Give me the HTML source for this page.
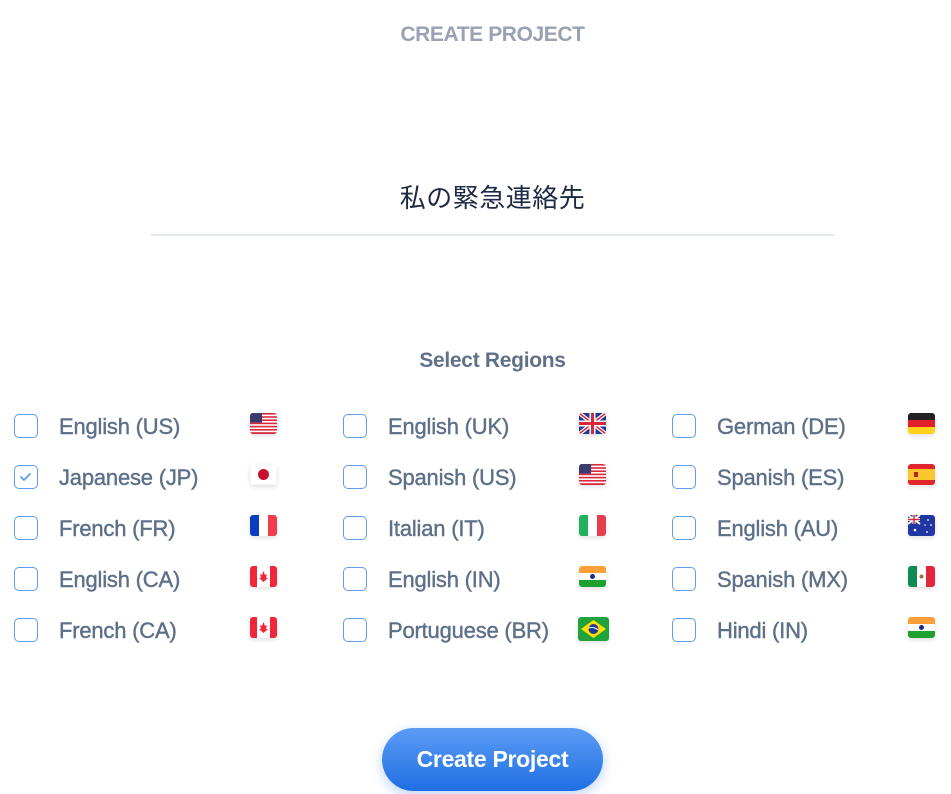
<!DOCTYPE html>
<html><head><meta charset="utf-8"><style>
*{margin:0;padding:0;box-sizing:border-box}
body{width:951px;height:794px;background:#fff;position:relative;overflow:hidden;font-family:"Liberation Sans","Noto Sans CJK JP",sans-serif}
.t{position:absolute;white-space:nowrap}
.title{left:0;width:985px;text-align:center;top:23px;font-size:21px;font-weight:bold;color:#99a1b3;letter-spacing:-0.4px}
.jp{left:0;width:985px;text-align:center;top:178px;font-size:26px;color:#1e2a44;letter-spacing:0.5px}
.line{position:absolute;left:151px;top:234px;width:683px;height:2px;background:#e3e8ec}
.sel{left:0;width:985px;text-align:center;top:349px;font-size:21px;font-weight:bold;color:#5f7088;letter-spacing:-0.3px}
.cb{position:absolute;width:24px;height:24px;border:1.5px solid #5c9cf2;border-radius:5px;background:#fff}
.lab{position:absolute;font-size:22px;color:#5d7088;white-space:nowrap;line-height:24px;-webkit-text-stroke:0.4px #5d7088;letter-spacing:-0.2px}
.fl{position:absolute;width:27px;height:21px;border-radius:3px;overflow:hidden;box-shadow:0 2px 5px rgba(0,0,0,.12)}
.fl svg{display:block;width:100%;height:100%}
.btn{position:absolute;left:382px;top:728px;width:221px;height:63px;border-radius:32px;background:linear-gradient(#5b9cf4,#1f6fe3);color:#fff;font-weight:bold;font-size:23px;text-align:center;line-height:62px;box-shadow:0 4px 12px rgba(40,110,230,.3);letter-spacing:-0.3px}
</style></head><body>
<svg width="0" height="0" style="position:absolute">
<defs>
<symbol id="us" viewBox="0 0 27 21"><rect width="27" height="21" fill="#fff"/><g fill="#d8283c"><rect y="0" width="27" height="1.6"/><rect y="3.2" width="27" height="1.6"/><rect y="6.4" width="27" height="1.6"/><rect y="9.6" width="27" height="1.6"/><rect y="12.8" width="27" height="1.6"/><rect y="16" width="27" height="1.6"/><rect y="19.2" width="27" height="1.8"/></g><rect width="12" height="9.6" fill="#3c3b6e"/></symbol>
<symbol id="uk" viewBox="0 0 27 21"><rect width="27" height="21" fill="#1f3a93"/><path d="M0 0L27 21M27 0L0 21" stroke="#fff" stroke-width="4"/><path d="M0 0L27 21M27 0L0 21" stroke="#d8283c" stroke-width="1.5"/><path d="M13.5 0V21M0 10.5H27" stroke="#fff" stroke-width="6"/><path d="M13.5 0V21M0 10.5H27" stroke="#d8283c" stroke-width="3"/></symbol>
<symbol id="de" viewBox="0 0 27 21"><rect width="27" height="7" fill="#222"/><rect y="7" width="27" height="7" fill="#e3202a"/><rect y="14" width="27" height="7" fill="#ffd11a"/></symbol>
<symbol id="jp" viewBox="0 0 27 21"><rect width="27" height="21" fill="#fff" stroke="#eee"/><circle cx="13.5" cy="10.5" r="5.5" fill="#c8102e"/></symbol>
<symbol id="es" viewBox="0 0 27 21"><rect width="27" height="21" fill="#e0252c"/><rect y="5" width="27" height="11" fill="#fcc72c"/><rect x="6" y="8" width="4" height="5" fill="#b5261e"/></symbol>
<symbol id="fr" viewBox="0 0 27 21"><rect width="9" height="21" fill="#0a3dbf"/><rect x="9" width="9" height="21" fill="#fff"/><rect x="18" width="9" height="21" fill="#f23d4f"/></symbol>
<symbol id="it" viewBox="0 0 27 21"><rect width="9" height="21" fill="#1eb35b"/><rect x="9" width="9" height="21" fill="#fff"/><rect x="18" width="9" height="21" fill="#e63d4f"/></symbol>
<symbol id="au" viewBox="0 0 27 21"><rect width="27" height="21" fill="#1f36a3"/><path d="M0 0L12 9M12 0L0 9" stroke="#fff" stroke-width="2"/><path d="M6 0V9M0 4.5H12" stroke="#fff" stroke-width="3"/><path d="M6 0V9M0 4.5H12" stroke="#d8283c" stroke-width="1.5"/><g fill="#fff"><circle cx="7" cy="15" r="1.3"/><circle cx="20" cy="5" r="0.9"/><circle cx="23" cy="10" r="0.9"/><circle cx="19" cy="17" r="0.9"/><circle cx="17" cy="10" r="0.8"/></g></symbol>
<symbol id="in" viewBox="0 0 27 21"><rect width="27" height="7" fill="#ff9f3a"/><rect y="7" width="27" height="7" fill="#fff"/><rect y="14" width="27" height="7" fill="#1fa12f"/><circle cx="13.5" cy="10.5" r="2.5" fill="#1f2a8c"/></symbol>
<symbol id="ca" viewBox="0 0 27 21"><rect width="27" height="21" fill="#fff"/><rect width="7" height="21" fill="#f2263a"/><rect x="20" width="7" height="21" fill="#f2263a"/><path d="M13.5 5L15 9L17 8L16 12L18 12L13.5 16L9 12L11 12L10 8L12 9Z" fill="#f2263a"/></symbol>
<symbol id="mx" viewBox="0 0 27 21"><rect width="9" height="21" fill="#0f8a52"/><rect x="9" width="9" height="21" fill="#fff"/><rect x="18" width="9" height="21" fill="#e3263c"/><circle cx="13.5" cy="10.5" r="2" fill="#a07040"/></symbol>
<symbol id="br" viewBox="0 0 31 24"><rect width="31" height="24" fill="#1fa33a"/><path d="M15.5 3L28 12L15.5 21L3 12Z" fill="#fedf00"/><circle cx="15.5" cy="12" r="5" fill="#1f3a93"/><path d="M10.5 11Q15.5 9.5 20.5 13" stroke="#fff" stroke-width="1" fill="none"/></symbol>
</defs></svg>

<div class="t title">CREATE PROJECT</div>
<div class="t jp">私の緊急連絡先</div>
<div class="line"></div>
<div class="t sel">Select Regions</div>

<div class="cb" style="left:14px;top:414px"></div><div class="lab" style="left:59px;top:415px">English (US)</div><div class="fl" style="left:250px;top:413px"><svg><use href="#us"/></svg></div>
<div class="cb" style="left:14px;top:465px"><svg width="21" height="21" viewBox="0 0 21 21"><path d="M6 11L9 14L15 8" stroke="#5c9cf2" stroke-width="1.8" fill="none" stroke-linecap="round" stroke-linejoin="round"/></svg></div><div class="lab" style="left:59px;top:466px">Japanese (JP)</div><div class="fl" style="left:250px;top:464px"><svg><use href="#jp"/></svg></div>
<div class="cb" style="left:14px;top:516px"></div><div class="lab" style="left:59px;top:517px">French (FR)</div><div class="fl" style="left:250px;top:515px"><svg><use href="#fr"/></svg></div>
<div class="cb" style="left:14px;top:567px"></div><div class="lab" style="left:59px;top:568px">English (CA)</div><div class="fl" style="left:250px;top:566px"><svg><use href="#ca"/></svg></div>
<div class="cb" style="left:14px;top:618px"></div><div class="lab" style="left:59px;top:619px">French (CA)</div><div class="fl" style="left:250px;top:617px"><svg><use href="#ca"/></svg></div>

<div class="cb" style="left:343px;top:414px"></div><div class="lab" style="left:388px;top:415px">English (UK)</div><div class="fl" style="left:579px;top:413px"><svg><use href="#uk"/></svg></div>
<div class="cb" style="left:343px;top:465px"></div><div class="lab" style="left:388px;top:466px">Spanish (US)</div><div class="fl" style="left:579px;top:464px"><svg><use href="#us"/></svg></div>
<div class="cb" style="left:343px;top:516px"></div><div class="lab" style="left:388px;top:517px">Italian (IT)</div><div class="fl" style="left:579px;top:515px"><svg><use href="#it"/></svg></div>
<div class="cb" style="left:343px;top:567px"></div><div class="lab" style="left:388px;top:568px">English (IN)</div><div class="fl" style="left:579px;top:566px"><svg><use href="#in"/></svg></div>
<div class="cb" style="left:343px;top:618px"></div><div class="lab" style="left:388px;top:619px">Portuguese (BR)</div><div class="fl" style="left:578px;top:617px;width:31px;height:24px"><svg viewBox="0 0 31 24"><use href="#br"/></svg></div>

<div class="cb" style="left:672px;top:414px"></div><div class="lab" style="left:717px;top:415px">German (DE)</div><div class="fl" style="left:908px;top:413px"><svg><use href="#de"/></svg></div>
<div class="cb" style="left:672px;top:465px"></div><div class="lab" style="left:717px;top:466px">Spanish (ES)</div><div class="fl" style="left:908px;top:464px"><svg><use href="#es"/></svg></div>
<div class="cb" style="left:672px;top:516px"></div><div class="lab" style="left:717px;top:517px">English (AU)</div><div class="fl" style="left:908px;top:515px"><svg><use href="#au"/></svg></div>
<div class="cb" style="left:672px;top:567px"></div><div class="lab" style="left:717px;top:568px">Spanish (MX)</div><div class="fl" style="left:908px;top:566px"><svg><use href="#mx"/></svg></div>
<div class="cb" style="left:672px;top:618px"></div><div class="lab" style="left:717px;top:619px">Hindi (IN)</div><div class="fl" style="left:908px;top:617px"><svg><use href="#in"/></svg></div>

<div class="btn">Create Project</div>
</body></html>
